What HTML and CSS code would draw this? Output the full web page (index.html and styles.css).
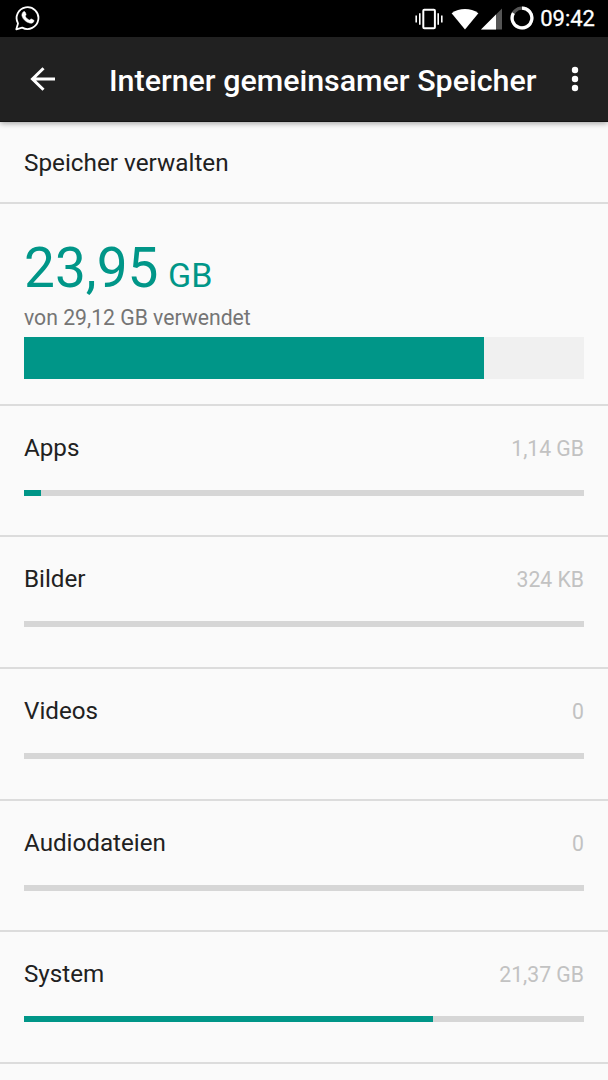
FILE: index.html
```
<!DOCTYPE html>
<html lang="de">

<head>
    <meta charset="UTF-8">
    <meta name="viewport" content="width=device-width, initial-scale=1.0">
    <title>Interner gemeinsamer Speicher</title>
    <link rel="stylesheet" href="styles.css">
</head>

<body>
    <div class="status">
        <svg class="chat-icon" width="26" height="26" viewBox="0 0 26 26">
            <path d="M1.3 24.3 3 18.4A10.9 10.9 0 1 1 7.2 22.6Z" fill="none" stroke="#fff" stroke-width="1.8" stroke-linejoin="round"/>
            <path d="M8.3 6.9c.4-.4 1.5-.5 1.8.1l1 2.3c.2.6-.9 1.5-.8 1.9.8 1.9 2.3 3.1 4.2 3.9.5.1 1.2-1.4 1.8-1.2l2.3 1.1c.5.3.3 1.3 0 1.9-.8 1.2-2.5 1.6-3.9 1.2-4-1.1-6.7-3.8-7.7-7-.4-1.6.2-3.2 1.3-4.2Z" fill="#fff" stroke="#fff" stroke-width=".5"/>
        </svg>
        <div class="status-right">
            <svg class="vibrate-icon" width="28" height="22" viewBox="0 0 28 22">
                <path d="M1.2 7.5v7M4.8 5.2v11.6M23.2 5.2v11.6M26.8 7.5v7" stroke="#fff" stroke-width="1.6"/>
                <rect x="8.3" y="1.8" width="11.6" height="18.4" rx="1" fill="none" stroke="#fff" stroke-width="2"/>
            </svg>
            <svg class="wifi-icon" width="28" height="22" viewBox="0 0 28 22">
                <path d="M.6 5.2C8.5-.4 19.5-.4 27.4 5.2L14 21.5Z" fill="#fff"/>
            </svg>
            <svg class="signal-icon" width="21" height="22" viewBox="0 0 21 22">
                <path d="M21 .5V21.5H0Z" fill="#555"/>
                <path d="M15 6.5V21.5H0Z" fill="#fff"/>
            </svg>
            <svg class="battery-icon" width="24" height="24" viewBox="0 0 24 24">
                <circle cx="12" cy="12" r="9.9" fill="none" stroke="#555" stroke-width="3.2"/>
                <path d="M12 2.1A9.9 9.9 0 1 1 3.4 7.1" fill="none" stroke="#fff" stroke-width="3.2"/>
            </svg>
            <span class="clock">09:42</span>
        </div>
    </div>

    <div class="header">
        <svg class="back-icon" width="26" height="24" viewBox="0 0 26 24">
            <path d="M25 12H3M13.5 1.2 2.5 12l11 10.8" fill="none" stroke="#fff" stroke-width="3"/>
        </svg>
        <h1 class="h-text">Interner gemeinsamer Speicher</h1>
        <svg class="more-icon" width="8" height="26" viewBox="0 0 8 26">
            <circle cx="4" cy="4" r="3.2" fill="#fff"/>
            <circle cx="4" cy="13" r="3.2" fill="#fff"/>
            <circle cx="4" cy="22" r="3.2" fill="#fff"/>
        </svg>
    </div>

    <div class="manage">Speicher verwalten</div>

    <div class="summary">
        <div class="total">23,95 <span class="unit">GB</span></div>
        <div class="used">von 29,12 GB verwendet</div>
        <div class="big-bar"><div class="fill" style="width: 82.1%"></div></div>
    </div>

    <div class="list">
        <div class="item">
            <div class="item-text"><span>Apps</span><span class="size">1,14 GB</span></div>
            <div class="bar"><div class="fill" style="width: 3.04%"></div></div>
        </div>
        <div class="item">
            <div class="item-text"><span>Bilder</span><span class="size">324 KB</span></div>
            <div class="bar"></div>
        </div>
        <div class="item">
            <div class="item-text"><span>Videos</span><span class="size">0</span></div>
            <div class="bar"></div>
        </div>
        <div class="item">
            <div class="item-text"><span>Audiodateien</span><span class="size">0</span></div>
            <div class="bar"></div>
        </div>
        <div class="item">
            <div class="item-text"><span>System</span><span class="size">21,37 GB</span></div>
            <div class="bar"><div class="fill" style="width: 73.04%"></div></div>
        </div>
    </div>
</body>

</html>
```
FILE: styles.css
```
* {
    box-sizing: border-box;
}

body {
    font-family: Roboto, sans-serif;
    margin: 0;
    height: 100vh;
    overflow: hidden;
    background-color: #fafafa;
    color: #212121;
    font-size: 24.2px;
}

svg {
    display: block;
    flex-shrink: 0;
}

.status {
    display: flex;
    justify-content: space-between;
    align-items: center;
    height: 37px;
    padding: 0 13px 0 15px;
    background-color: #000;
    color: #fff;
}

.chat-icon {
    margin-bottom: 1px;
}

.status-right {
    display: flex;
    align-items: center;
}

.wifi-icon {
    margin-left: 8px;
}

.signal-icon {
    margin-left: 2px;
}

.battery-icon {
    margin: 0 0 1px 8px;
}

.clock {
    margin-left: 6px;
    font-size: 22px;
    line-height: 37px;
    -webkit-text-stroke: 0.3px #fff;
}

.header {
    display: flex;
    align-items: center;
    height: 85px;
    padding: 0 29px 0 30px;
    background-color: #212121;
    border-bottom: 1px solid #151515;
    color: #fff;
    box-shadow: 0 1px 6px rgba(0, 0, 0, 0.4);
}

.h-text {
    flex: 1;
    margin: 3px 0 0 53px;
    font-size: 30.4px;
    font-weight: 500;
    line-height: 36px;
    white-space: nowrap;
}

.manage {
    height: 82px;
    padding: 0 24px;
    font-size: 24.3px;
    line-height: 82px;
    border-bottom: 2px solid #dcdcdc;
}

.summary {
    height: 201.5px;
    padding: 31px 24px 0;
    border-bottom: 2px solid #dcdcdc;
}

.total {
    height: 66px;
    font-size: 55px;
    line-height: 66px;
    color: #009688;
    white-space: nowrap;
}

.unit {
    font-size: 34px;
    margin-left: -4px;
}

.used {
    height: 36.4px;
    font-size: 21.2px;
    line-height: 33px;
    color: #757575;
}

.big-bar {
    height: 42px;
    background-color: #f0f0f0;
}

.fill {
    height: 100%;
    background-color: #009688;
}

.item {
    height: 131.7px;
    padding: 26px 24px 0;
    border-bottom: 2px solid #dcdcdc;
}

.item-text {
    display: flex;
    justify-content: space-between;
    align-items: baseline;
    line-height: 32px;
}

.size {
    font-size: 21.2px;
    color: #c2c2c2;
}

.bar {
    height: 6px;
    margin-top: 25px;
    background-color: #d6d6d6;
}
```
